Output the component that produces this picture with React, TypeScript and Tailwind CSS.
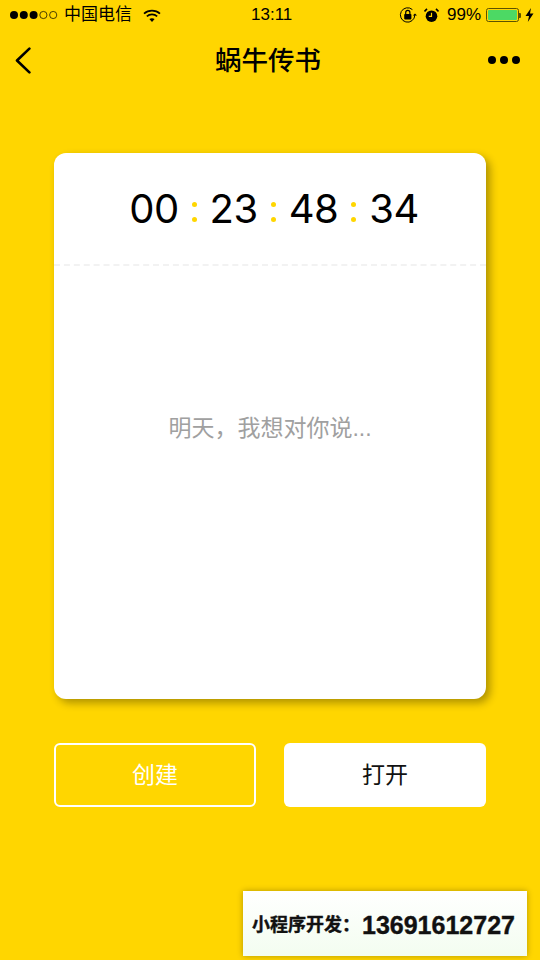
import React from "react";

const font = "font-['Liberation_Sans','Noto_Sans_CJK_SC',sans-serif]";

function Signal() {
  return (
    <svg width="50" height="10" viewBox="0 0 50 10">
      <circle cx="5" cy="5" r="4" fill="#000" />
      <circle cx="14.8" cy="5" r="4" fill="#000" />
      <circle cx="24.6" cy="5" r="4" fill="#000" />
      <circle cx="34.4" cy="5" r="3.6" fill="none" stroke="#000" strokeWidth="0.7" />
      <circle cx="44.2" cy="5" r="3.6" fill="none" stroke="#000" strokeWidth="0.7" />
    </svg>
  );
}

function Wifi() {
  return (
    <svg width="18" height="13" viewBox="0 0 18 13" fill="none" stroke="#000" strokeWidth="1.7">
      <path d="M1 4.6C5.5 .6 12.5 .6 17 4.6" />
      <path d="M3.8 7.3C6.8 4.7 11.2 4.7 14.2 7.3" />
      <path d="M9 13L6.4 10.1C8 8.9 10 8.9 11.6 10.1Z" fill="#000" stroke="none" />
    </svg>
  );
}

function RotationLock() {
  return (
    <svg width="18" height="18" viewBox="0 0 18 18" fill="none">
      <path d="M15.8 9A7.2 7.2 0 1 1 13.4 3.6" stroke="#000" strokeWidth="1" />
      <path d="M13.8 9.6L16 7.4L18 9.6Z" fill="#000" />
      <rect x="5.2" y="8" width="7.2" height="5.4" rx="0.8" fill="#000" />
      <path d="M6.7 8V6.4a2.1 2.1 0 0 1 4.2 0V8" stroke="#000" strokeWidth="1.2" />
    </svg>
  );
}

function Alarm() {
  return (
    <svg width="15" height="15" viewBox="0 0 15 15">
      <circle cx="7.5" cy="8.2" r="5.8" fill="#000" />
      <path d="M7.5 4.8V8.4H4.8" fill="none" stroke="#ffd600" strokeWidth="1.2" />
      <path d="M.5 3.4L3 .9M14.5 3.4L12 .9" stroke="#000" strokeWidth="1.6" />
    </svg>
  );
}

function Battery() {
  return (
    <div className="flex items-center">
      <div className="w-[33px] h-[14px] border border-[#5c5200] rounded-[2.5px] p-[1px]">
        <div className="h-full w-full bg-[#4cd964] rounded-[1px]" />
      </div>
      <div className="w-[2px] h-[5px] bg-[#5c5200] rounded-r-[1px]" />
    </div>
  );
}

function Bolt() {
  return (
    <svg width="9" height="14" viewBox="0 0 9 14" className="ml-[4px]">
      <path d="M6 0L0.5 8H4L2.8 14L8.5 5.6H5Z" fill="#000" />
    </svg>
  );
}

function Back() {
  return (
    <svg width="16" height="27" viewBox="0 0 16 27" fill="none" stroke="#000" strokeWidth="2.6" strokeLinecap="round" strokeLinejoin="round">
      <path d="M14.4 1.6L2 13.5L14.4 25.4" />
    </svg>
  );
}

function Colon() {
  return (
    <span className="w-[31px] flex flex-col items-center gap-[10px] pt-[7px]">
      <span className="w-[5px] h-[5px] rounded-full bg-[#ffd600]" />
      <span className="w-[5px] h-[5px] rounded-full bg-[#ffd600]" />
    </span>
  );
}

export default function App() {
  return (
    <div className={`relative w-[540px] h-[960px] overflow-hidden bg-[#ffd600] text-black ${font}`}>
      <div className="h-[30px] flex items-center justify-between pl-[9px] pr-[6px] relative">
        <div className="flex items-center">
          <Signal />
          <span className="ml-[5px] text-[17px]">中国电信</span>
          <span className="ml-[11px]"><Wifi /></span>
        </div>
        <span className="absolute left-[251px] top-[4px] text-[17px] leading-[22px]">13:11</span>
        <div className="flex items-center">
          <RotationLock />
          <span className="ml-[7px]"><Alarm /></span>
          <span className="ml-[8px] text-[17px]">99%</span>
          <span className="ml-[5px]"><Battery /></span>
          <Bolt />
        </div>
      </div>

      <div className="h-[60px] flex items-center justify-between pl-[15px] pr-[20px]">
        <Back />
        <h1 className="text-[26.5px] font-medium absolute left-0 right-[4px] mt-[3px] text-center">蜗牛传书</h1>
        <div className="flex gap-[4px]">
          <span className="w-[8px] h-[8px] rounded-full bg-black" />
          <span className="w-[8px] h-[8px] rounded-full bg-black" />
          <span className="w-[8px] h-[8px] rounded-full bg-black" />
        </div>
      </div>

      <div className="mt-[63px] mx-[54px] h-[546px] bg-white rounded-[12px] shadow-[4px_4px_8px_rgba(0,0,0,0.32)] flex flex-col">
        <div className="h-[113px] border-b-2 border-dashed border-[#f2f2f2] flex items-center justify-center pl-[8px] font-['Inter',sans-serif] text-[40px] leading-none tracking-[-0.5px]">
          <span>00</span>
          <Colon />
          <span>23</span>
          <Colon />
          <span>48</span>
          <Colon />
          <span>34</span>
        </div>
        <div className="flex-1 flex items-start justify-center pt-[147px] text-[23px] leading-[30px] text-[#a0a0a0]">
          明天，我想对你说...
        </div>
      </div>

      <div className="mt-[44px] mx-[54px] flex justify-between">
        <button className="w-[202px] h-[64px] border-2 border-white rounded-[6px] pt-[1px] text-white text-[23px]">创建</button>
        <button className="w-[202px] h-[64px] bg-white rounded-[6px] pt-[1px] text-[23px] text-[#111]">打开</button>
      </div>

      <div className="absolute left-[243px] top-[891px] w-[284px] h-[65px] bg-gradient-to-b from-white to-[#f3fdf0] shadow-[0_0_6px_rgba(0,0,0,0.3)] flex items-center pl-[9px] pt-[4px] font-bold text-[#111] [-webkit-text-stroke:0.4px_#111]">
        <span className="text-[18px] w-[110px]">小程序开发：</span>
        <span className="text-[25px]">13691612727</span>
      </div>
    </div>
  );
}
